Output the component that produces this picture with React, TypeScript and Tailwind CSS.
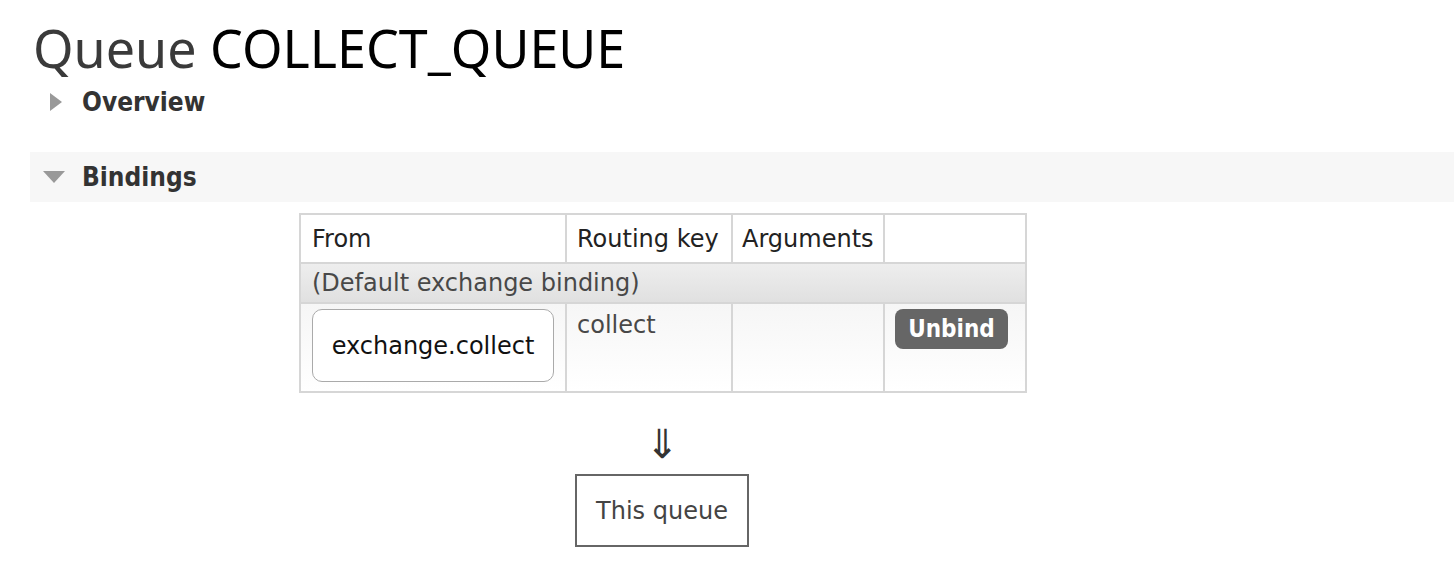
import React from "react";

export default function App() {
  const f = { fontFamily: '"DejaVu Sans", Verdana, sans-serif' };
  const fc = { fontFamily: '"DejaVu Sans Condensed", "DejaVu Sans", sans-serif' };
  return (
    <div className="w-[1454px] h-[584px] bg-white overflow-hidden text-[#484848]" style={f}>
      <h1 className="pl-[33px] pt-[17px] text-[52px] leading-[62px] text-[#3a3a3a]" style={{ fontFamily: '"Noto Sans", sans-serif' }}>
        Queue <span className="text-black">COLLECT_QUEUE</span>
      </h1>
      <div className="flex items-center h-[32px] mt-[7px] pl-[50px]">
        <svg width="12" height="18" viewBox="0 0 12 18" className="mr-[20px]">
          <polygon points="0,0 12,9 0,18" fill="#999" />
        </svg>
        <span className="text-[26px] font-bold text-[#333]" style={fc}>Overview</span>
      </div>
      <div className="ml-[30px] mt-[34px] h-[50px] bg-[#f7f7f7] flex items-center pl-[13px]">
        <svg width="22" height="12" viewBox="0 0 22 12" className="mr-[17px]">
          <polygon points="0,0 22,0 11,12" fill="#999" />
        </svg>
        <span className="text-[26px] font-bold text-[#333]" style={fc}>Bindings</span>
      </div>
      <div className="ml-[299px] mt-[11px]">
        <table className="border-collapse table-fixed text-[24px]">
          <thead>
            <tr className="h-[49px] bg-white">
              <th className="border-2 border-[#d6d6d6] w-[266px] text-left font-normal px-[11px] text-[#222]">From</th>
              <th className="border-2 border-[#d6d6d6] w-[166px] text-left font-normal px-[10px] text-[#222] whitespace-nowrap">Routing key</th>
              <th className="border-2 border-[#d6d6d6] w-[152px] text-left font-normal px-[9px] text-[#222]">Arguments</th>
              <th className="border-2 border-[#d6d6d6] w-[142px]"></th>
            </tr>
          </thead>
          <tbody>
            <tr className="h-[40px] bg-gradient-to-b from-[#eeeeee] to-[#e0e0e0]">
              <td colSpan={4} className="border-2 border-[#d6d6d6] px-[11px] text-[#484848]">(Default exchange binding)</td>
            </tr>
            <tr className="h-[89px] bg-gradient-to-b from-[#f6f6f6] to-white align-top">
              <td className="border-2 border-[#d6d6d6] px-[11px] py-[5px]">
                <div className="h-[73px] border-[1.5px] border-[#aaa] rounded-[10px] bg-white flex items-center justify-center text-[#111]">
                  exchange.collect
                </div>
              </td>
              <td className="border-2 border-[#d6d6d6] px-[10px] pt-[3px]">collect</td>
              <td className="border-2 border-[#d6d6d6]"></td>
              <td className="border-2 border-[#d6d6d6] px-[10px] pt-[5px]">
                <div className="w-[113px] h-[40px] rounded-[8px] bg-[#666] text-white font-bold flex items-center justify-center text-[24px]" style={fc}>
                  Unbind
                </div>
              </td>
            </tr>
          </tbody>
        </table>
      </div>
      <div className="ml-[575px] w-[174px] flex flex-col items-center">
        <div className="text-[40px] leading-[44px] mt-[29px] text-[#333]">⇓</div>
        <div className="w-[174px] h-[73px] mt-[8px] border-2 border-[#666] flex items-center justify-center text-[24px] text-[#444]">
          This queue
        </div>
      </div>
    </div>
  );
}
